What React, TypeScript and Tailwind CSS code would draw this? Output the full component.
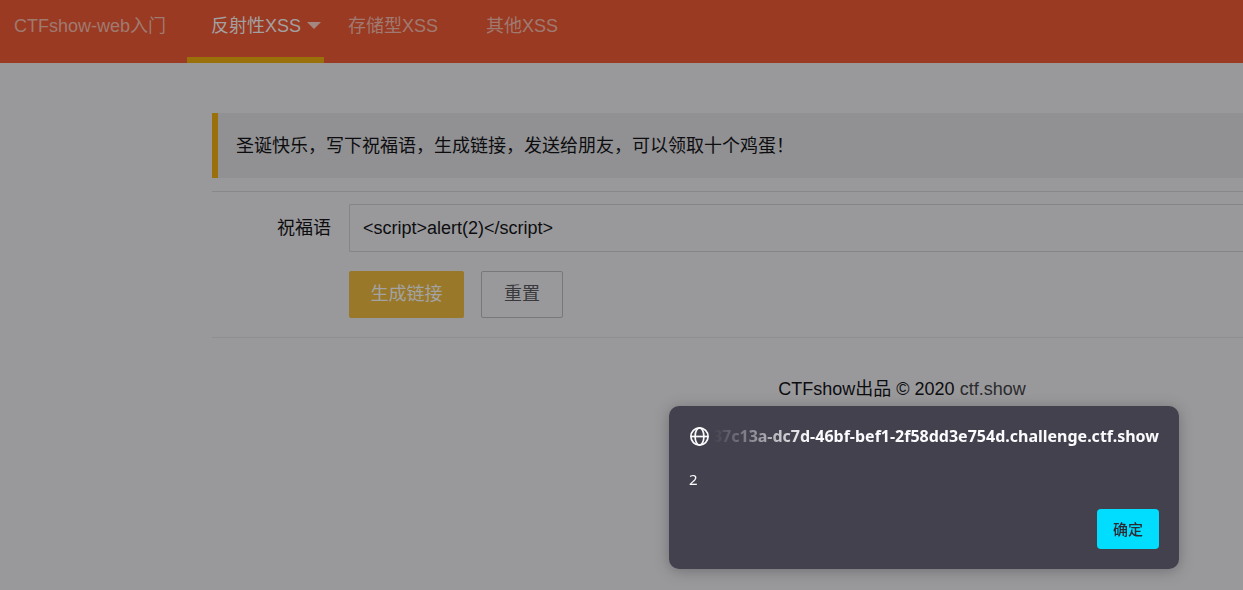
import { useState } from "react";

const navItems = [
  { label: "反射性XSS", active: true },
  { label: "存储型XSS", active: false },
  { label: "其他XSS", active: false },
];

function GlobeIcon() {
  return (
    <svg
      viewBox="0 0 20 20"
      className="h-5 w-5 shrink-0"
      fill="none"
      stroke="#fbfbfe"
      strokeWidth="1.7"
      aria-hidden="true"
    >
      <circle cx="10.5" cy="10.5" r="8.6" />
      <ellipse cx="10.5" cy="10.5" rx="4.4" ry="8.6" />
      <path d="M1.9 10.5h17.2" />
    </svg>
  );
}

function Header() {
  return (
    <header className="flex h-[63px] bg-[#9a3a23] text-[#a07a70]">
      <a href="#" className="w-[187px] shrink-0 pl-[14px] leading-[52px]">
        CTFshow-web入门
      </a>
      <nav className="flex">
        {navItems.map((item) => (
          <a
            key={item.label}
            href="#"
            className={
              item.active
                ? "relative w-[137px] border-b-6 border-[#997009] pl-6 leading-[52px] whitespace-nowrap text-[#a3a0a1]"
                : "w-[138px] pl-6 leading-[52px] whitespace-nowrap"
            }
          >
            {item.label}
            {item.active && (
              <svg
                viewBox="0 0 14 7"
                className="absolute top-[22px] right-[3px] h-[7px] w-[14px]"
                fill="#a38780"
                aria-hidden="true"
              >
                <path d="M0 0h14L7 7z" />
              </svg>
            )}
          </a>
        ))}
      </nav>
    </header>
  );
}

function Dialog() {
  const [open, setOpen] = useState(true);
  if (!open) return null;
  return (
    <div
      role="dialog"
      aria-labelledby="dialog-title"
      className="fixed top-[406px] right-16 w-[510px] rounded-[10px] bg-[#42414d] p-5 font-['Noto_Sans','Noto_Sans_CJK_SC',sans-serif] text-[15px] leading-5 text-[#fbfbfe] shadow-[0_2px_14px_rgba(40,40,50,0.35)]"
    >
      <div className="flex items-center gap-1">
        <GlobeIcon />
        <div className="flex min-w-0 flex-1 justify-end overflow-hidden [mask-image:linear-gradient(to_right,transparent,black_96px)]">
          <h2 id="dialog-title" className="text-base leading-5 font-bold whitespace-nowrap">
            637c13a-dc7d-46bf-bef1-2f58dd3e754d.challenge.ctf.show
          </h2>
        </div>
      </div>
      <p className="mt-[23px]">2</p>
      <div className="mt-5 flex justify-end">
        <button
          type="button"
          onClick={() => setOpen(false)}
          className="h-10 rounded bg-[#00ddff] px-4 font-medium text-[#2b2a33]"
        >
          确定
        </button>
      </div>
    </div>
  );
}

export default function App() {
  return (
    <div className="min-h-screen overflow-x-hidden bg-[#99999b] font-['Liberation_Sans','Noto_Sans_CJK_SC',sans-serif] text-[18px] text-[#0d0d10]">
      <Header />
      <main className="pt-[50px] pl-[212px]">
        <blockquote className="border-l-6 border-[#997009] bg-[#919193] pt-[17px] pb-[15px] pl-[18px] leading-[33px]">
          圣诞快乐，写下祝福语，生成链接，发送给朋友，可以领取十个鸡蛋！
        </blockquote>
        <hr className="mt-[13px] mb-3 border-[#88888b]" />
        <form onSubmit={(e) => e.preventDefault()}>
          <div className="flex items-center">
            <label htmlFor="wish" className="w-[137px] shrink-0 pr-[18px] text-right">
              祝福语
            </label>
            <input
              id="wish"
              type="text"
              defaultValue="<script>alert(2)</script>"
              className="h-12 min-w-0 flex-1 rounded-l-xs border border-r-0 border-[#858588] px-[13px] outline-none"
            />
          </div>
          <div className="mt-[19px] flex gap-[17px] pl-[137px]">
            <button
              type="submit"
              className="h-[47px] w-[115px] rounded-xs bg-[#99782a] text-[#a3a3a3]"
            >
              生成链接
            </button>
            <button
              type="reset"
              className="h-[47px] w-[82px] rounded-xs border border-[#78787a] text-[#3a3a3e]"
            >
              重置
            </button>
          </div>
        </form>
        <hr className="mt-[19px] border-[#8f8f92]" />
        <footer className="pt-[37px] pl-[349px] text-center leading-7">
          CTFshow出品 © 2020{" "}
          <a href="#" className="text-[#2b2b2e]">
            ctf.show
          </a>
        </footer>
      </main>
      <Dialog />
    </div>
  );
}
